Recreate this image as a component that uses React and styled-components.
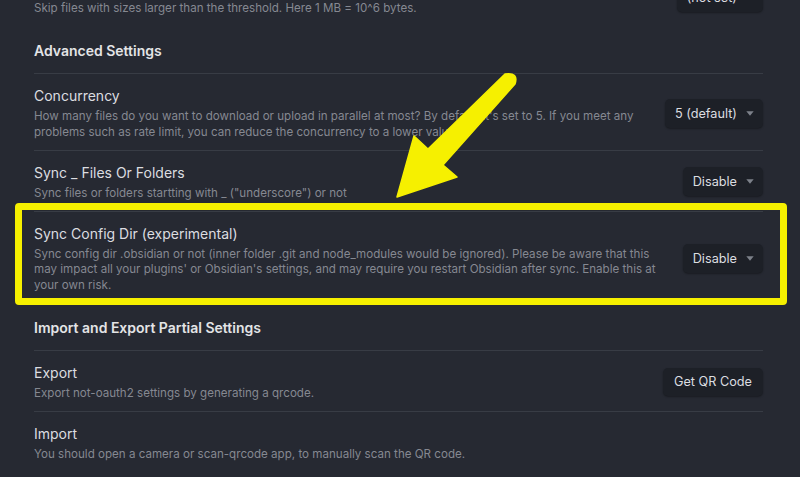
import styled, { createGlobalStyle } from "styled-components";

const GlobalStyle = createGlobalStyle`
  html, body {
    margin: 0;
    padding: 0;
    background: #262932;
  }
  body {
    font-family: Inter, "Noto Sans", "Liberation Sans", sans-serif;
    -webkit-font-smoothing: antialiased;
  }
`;

const settings = [
  {
    name: "Skip Large Files",
    desc: "Skip files with sizes larger than the threshold. Here 1 MB = 10^6 bytes.",
    control: { type: "select", value: "(not set)" },
  },
  { heading: "Advanced Settings" },
  {
    name: "Concurrency",
    desc: "How many files do you want to download or upload in parallel at most? By default it's set to 5. If you meet any problems such as rate limit, you can reduce the concurrency to a lower value.",
    control: { type: "select", value: "5 (default)" },
  },
  {
    name: "Sync _ Files Or Folders",
    desc: 'Sync files or folders startting with _ ("underscore") or not',
    control: { type: "select", value: "Disable" },
  },
  {
    name: "Sync Config Dir (experimental)",
    desc: "Sync config dir .obsidian or not (inner folder .git and node_modules would be ignored). Please be aware that this may impact all your plugins' or Obsidian's settings, and may require you restart Obsidian after sync. Enable this at your own risk.",
    control: { type: "select", value: "Disable" },
    highlight: true,
  },
  { heading: "Import and Export Partial Settings" },
  {
    name: "Export",
    desc: "Export not-oauth2 settings by generating a qrcode.",
    control: { type: "button", value: "Get QR Code" },
  },
  {
    name: "Import",
    desc: "You should open a camera or scan-qrcode app, to manually scan the QR code.",
  },
];

const Caret = () => (
  <svg width="8" height="5" viewBox="0 0 8 5">
    <path d="M0.3 0.3 L7.7 0.3 L4 4.7 Z" fill="#7d818a" />
  </svg>
);

const Arrow = () => (
  <ArrowLayer viewBox="0 0 800 477" width="800" height="477">
    <path
      d="M505 74 L428 149 L414 136 L397 197 L457 177 L443 165 L515 84 Q519 72 505 74 Z"
      fill="#f6f000"
      stroke="#f6f000"
      strokeWidth="1.5"
      strokeLinejoin="round"
    />
  </ArrowLayer>
);

const App = () => {
  return (
    <>
      <GlobalStyle />
      <Page>
        <List>
          {settings.map((s, i) =>
            s.heading ? (
              <Heading key={i}>{s.heading}</Heading>
            ) : (
              <Item key={i} $first={i === 0} $highlight={s.highlight}>
                <Info>
                  <Name>{s.name}</Name>
                  <Desc>{s.desc}</Desc>
                </Info>
                {s.control && s.control.type === "select" && (
                  <Dropdown>
                    {s.control.value}
                    <Caret />
                  </Dropdown>
                )}
                {s.control && s.control.type === "button" && (
                  <Button>{s.control.value}</Button>
                )}
              </Item>
            )
          )}
        </List>
        <Arrow />
      </Page>
    </>
  );
};

const Page = styled.div`
  position: relative;
  width: 800px;
  height: 477px;
  overflow: hidden;
  background: #262932;
`;

/* scrolled list: the first row's title sits above the window */
const List = styled.div`
  margin-top: -35px;
  padding: 0 37px 0 34px;
`;

const Item = styled.div`
  position: relative;
  display: flex;
  align-items: center;
  padding: 12px 0 10px;
  border-top: 1px solid ${(p) => (p.$first ? "transparent" : "#383c45")};

  ${(p) =>
    p.$highlight &&
    `
    &::after {
      content: "";
      position: absolute;
      top: -9px;
      bottom: -2px;
      left: -19px;
      right: -24px;
      border: 7px solid #f6f000;
      border-radius: 4px;
      pointer-events: none;
    }
  `}
`;

const Heading = styled.div`
  padding: 15px 0 12px;
  font-size: 14px;
  line-height: 20px;
  font-weight: 600;
  color: #e3e4e6;
`;

const Info = styled.div`
  flex: 1 1 auto;
  margin-right: 16px;
`;

const Name = styled.div`
  font-size: 14px;
  line-height: 20px;
  color: #dcdde0;
`;

const Desc = styled.div`
  margin-top: 3px;
  font-size: 11.6px;
  line-height: 15.25px;
  color: #858891;
`;

const Dropdown = styled.div`
  flex: none;
  display: inline-flex;
  align-items: center;
  gap: 9px;
  height: 29px;
  padding: 0 9px 0 10px;
  border-radius: 5px;
  background: #1d2027;
  box-shadow: 0 1px 2px rgba(0, 0, 0, 0.35);
  font-size: 12.7px;
  color: #dcdde0;
  white-space: nowrap;
`;

const Button = styled.div`
  flex: none;
  display: inline-flex;
  align-items: center;
  height: 28px;
  padding: 0 11px;
  border-radius: 5px;
  background: #1d2027;
  box-shadow: 0 1px 2px rgba(0, 0, 0, 0.35);
  font-size: 12.7px;
  color: #dcdde0;
`;

const ArrowLayer = styled.svg`
  position: absolute;
  top: 0;
  left: 0;
  pointer-events: none;
`;

export default App;
